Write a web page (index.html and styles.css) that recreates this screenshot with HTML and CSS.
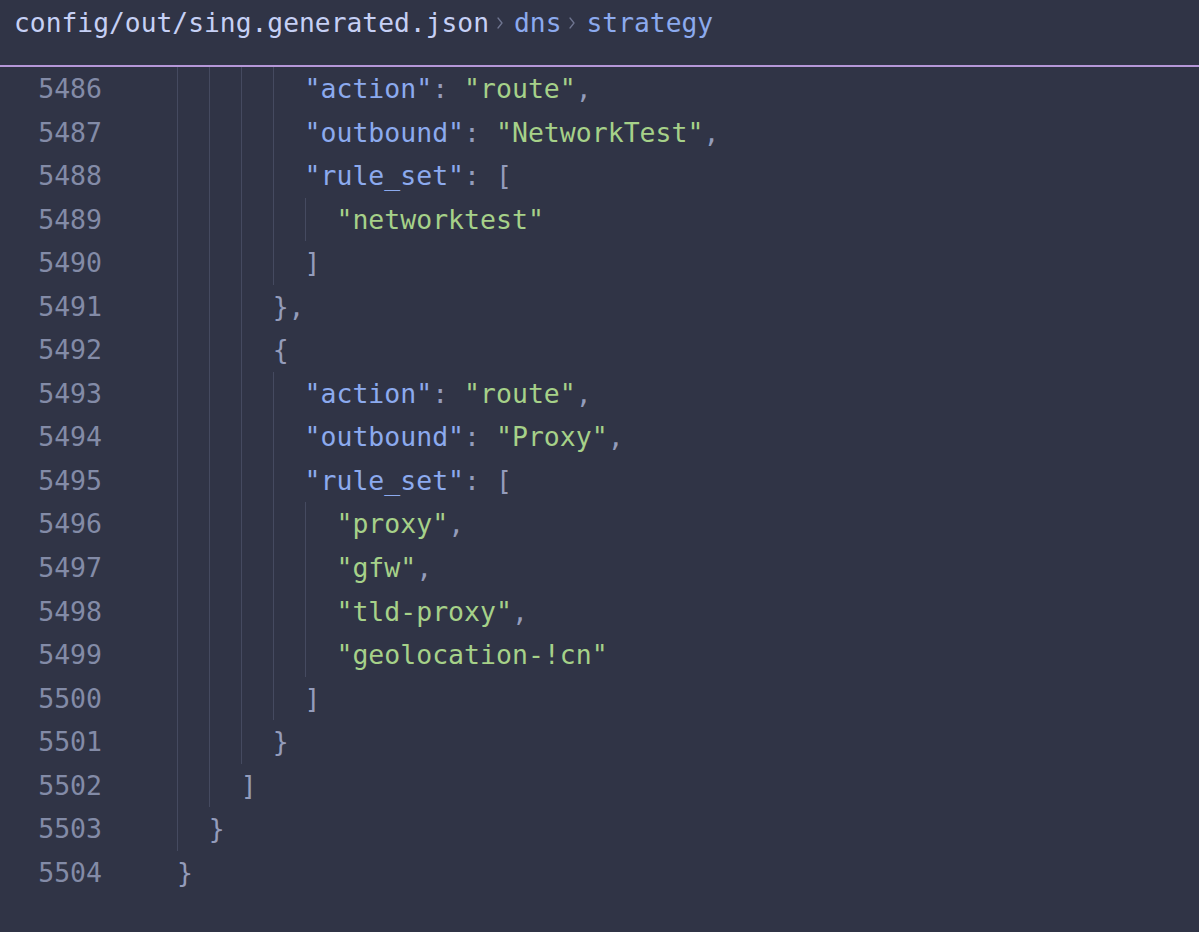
FILE: index.html
```html
<!DOCTYPE html>
<html lang="en">
<head>
<meta charset="utf-8">
<title>sing.generated.json</title>
<link rel="stylesheet" href="styles.css">
</head>
<body>
<div class="editor">
  <div class="crumbs">
    <span class="path">config/out/sing.generated.json</span>
    <svg class="chev" viewBox="0 0 8 14" width="8" height="14"><path d="M2 2 L6 7 L2 12" fill="none" stroke="currentColor" stroke-width="1.3" stroke-linecap="round" stroke-linejoin="round"/></svg>
    <span class="sym">dns</span>
    <svg class="chev" viewBox="0 0 8 14" width="8" height="14"><path d="M2 2 L6 7 L2 12" fill="none" stroke="currentColor" stroke-width="1.3" stroke-linecap="round" stroke-linejoin="round"/></svg>
    <span class="sym">strategy</span>
  </div>
  <div class="code">
    <div class="line"><span class="ln">5486</span><span class="src"><span class="pad"></span><span class="g"></span><span class="g"></span><span class="g"></span><span class="g"></span><span class="k">"action"</span><span class="p">: </span><span class="s">"route"</span><span class="p">,</span></span></div>
    <div class="line"><span class="ln">5487</span><span class="src"><span class="pad"></span><span class="g"></span><span class="g"></span><span class="g"></span><span class="g"></span><span class="k">"outbound"</span><span class="p">: </span><span class="s">"NetworkTest"</span><span class="p">,</span></span></div>
    <div class="line"><span class="ln">5488</span><span class="src"><span class="pad"></span><span class="g"></span><span class="g"></span><span class="g"></span><span class="g"></span><span class="k">"rule_set"</span><span class="p">: [</span></span></div>
    <div class="line"><span class="ln">5489</span><span class="src"><span class="pad"></span><span class="g"></span><span class="g"></span><span class="g"></span><span class="g"></span><span class="g"></span><span class="s">"networktest"</span></span></div>
    <div class="line"><span class="ln">5490</span><span class="src"><span class="pad"></span><span class="g"></span><span class="g"></span><span class="g"></span><span class="g"></span><span class="p">]</span></span></div>
    <div class="line"><span class="ln">5491</span><span class="src"><span class="pad"></span><span class="g"></span><span class="g"></span><span class="g"></span><span class="p">},</span></span></div>
    <div class="line"><span class="ln">5492</span><span class="src"><span class="pad"></span><span class="g"></span><span class="g"></span><span class="g"></span><span class="p">{</span></span></div>
    <div class="line"><span class="ln">5493</span><span class="src"><span class="pad"></span><span class="g"></span><span class="g"></span><span class="g"></span><span class="g"></span><span class="k">"action"</span><span class="p">: </span><span class="s">"route"</span><span class="p">,</span></span></div>
    <div class="line"><span class="ln">5494</span><span class="src"><span class="pad"></span><span class="g"></span><span class="g"></span><span class="g"></span><span class="g"></span><span class="k">"outbound"</span><span class="p">: </span><span class="s">"Proxy"</span><span class="p">,</span></span></div>
    <div class="line"><span class="ln">5495</span><span class="src"><span class="pad"></span><span class="g"></span><span class="g"></span><span class="g"></span><span class="g"></span><span class="k">"rule_set"</span><span class="p">: [</span></span></div>
    <div class="line"><span class="ln">5496</span><span class="src"><span class="pad"></span><span class="g"></span><span class="g"></span><span class="g"></span><span class="g"></span><span class="g"></span><span class="s">"proxy"</span><span class="p">,</span></span></div>
    <div class="line"><span class="ln">5497</span><span class="src"><span class="pad"></span><span class="g"></span><span class="g"></span><span class="g"></span><span class="g"></span><span class="g"></span><span class="s">"gfw"</span><span class="p">,</span></span></div>
    <div class="line"><span class="ln">5498</span><span class="src"><span class="pad"></span><span class="g"></span><span class="g"></span><span class="g"></span><span class="g"></span><span class="g"></span><span class="s">"tld-proxy"</span><span class="p">,</span></span></div>
    <div class="line"><span class="ln">5499</span><span class="src"><span class="pad"></span><span class="g"></span><span class="g"></span><span class="g"></span><span class="g"></span><span class="g"></span><span class="s">"geolocation-!cn"</span></span></div>
    <div class="line"><span class="ln">5500</span><span class="src"><span class="pad"></span><span class="g"></span><span class="g"></span><span class="g"></span><span class="g"></span><span class="p">]</span></span></div>
    <div class="line"><span class="ln">5501</span><span class="src"><span class="pad"></span><span class="g"></span><span class="g"></span><span class="g"></span><span class="p">}</span></span></div>
    <div class="line"><span class="ln">5502</span><span class="src"><span class="pad"></span><span class="g"></span><span class="g"></span><span class="p">]</span></span></div>
    <div class="line"><span class="ln">5503</span><span class="src"><span class="pad"></span><span class="g"></span><span class="p">}</span></span></div>
    <div class="line"><span class="ln">5504</span><span class="src"><span class="pad"></span><span class="p">}</span></span></div>
  </div>
</div>
</body>
</html>
```

FILE: styles.css
```css
html, body {
  margin: 0;
  padding: 0;
  background: #303446;
}

.editor {
  width: 1199px;
  height: 932px;
  background: #303446;
  font-family: "DejaVu Sans Mono", "Liberation Mono", monospace;
  overflow: hidden;
}

.crumbs {
  height: 67px;
  box-sizing: border-box;
  border-bottom: 2px solid #b597d8;
  display: flex;
  align-items: center;
  padding: 0 0 20px 14px;
  font-size: 26.3px;
  white-space: pre;
}

.path {
  color: #c6d0f5;
}

.chev {
  color: #6f7590;
  margin: 0 10px 0 7px;
}

.sym {
  color: #8caaee;
}

.code {
  font-size: 26.5px;
  line-height: 43.55px;
}

.line {
  display: flex;
  height: 43.55px;
  white-space: pre;
}

.ln {
  width: 102px;
  text-align: right;
  color: #838ba7;
  flex: none;
}

.src {
  margin-left: 43px;
  display: flex;
  align-items: stretch;
}

.pad,
.g {
  display: inline-block;
  width: 2ch;
  flex: none;
  box-sizing: border-box;
}

.g {
  border-left: 1px solid #454a60;
}

.k { color: #8caaee; }
.s { color: #a6d189; }
.p { color: #949cbb; }
```
